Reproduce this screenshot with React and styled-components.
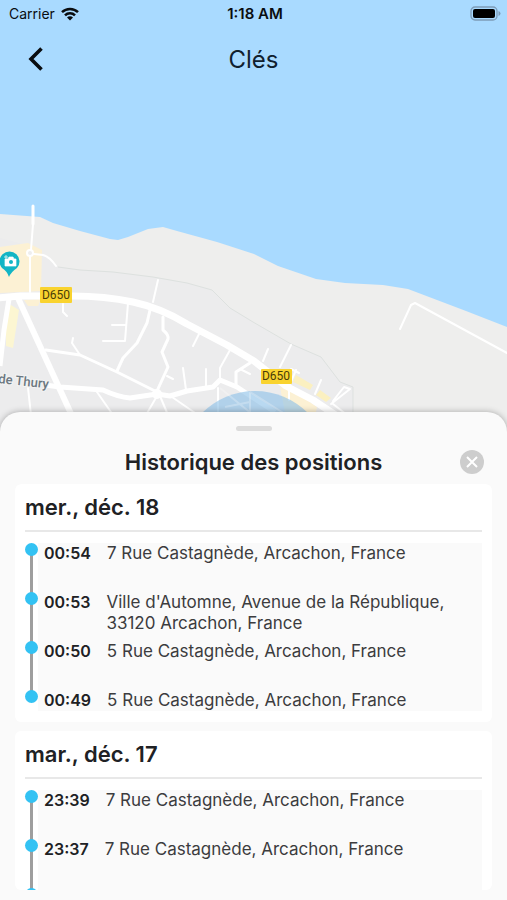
import styled, { createGlobalStyle } from "styled-components";

const history = [
  {
    day: "mer., déc. 18",
    positions: [
      { time: "00:54", address: "7 Rue Castagnède, Arcachon, France" },
      {
        time: "00:53",
        address: "Ville d'Automne, Avenue de la République, 33120 Arcachon, France",
      },
      { time: "00:50", address: "5 Rue Castagnède, Arcachon, France" },
      { time: "00:49", address: "5 Rue Castagnède, Arcachon, France" },
    ],
  },
  {
    day: "mar., déc. 17",
    positions: [
      { time: "23:39", address: "7 Rue Castagnède, Arcachon, France" },
      { time: "23:37", address: "7 Rue Castagnède, Arcachon, France" },
      { time: "23:36", address: "7 Rue Castagnède, Arcachon, France" },
    ],
  },
];

export default function App() {
  return (
    <Screen>
      <GlobalStyle />
      <CityMap />
      <MapPeek>
        <StatusBar />
        <NavBar>
          <BackButton type="button" aria-label="Retour">
            <svg width="18" height="26" viewBox="0 0 18 26">
              <path
                d="M14.500 2.500 4 13l10.500 10.500"
                fill="none"
                stroke="#0a0d10"
                strokeWidth="3.600"
                strokeLinejoin="miter"
              />
            </svg>
          </BackButton>
          <NavTitle>Clés</NavTitle>
        </NavBar>
      </MapPeek>
      <Sheet>
        <Grabber />
        <SheetHeader>
          <SheetTitle>Historique des positions</SheetTitle>
          <CloseButton type="button" aria-label="Fermer">
            <svg width="12" height="12" viewBox="0 0 12 12">
              <path d="M1 1l10 10M11 1 1 11" stroke="#fff" strokeWidth="2" />
            </svg>
          </CloseButton>
        </SheetHeader>
        <DayList>
          {history.map((item) => (
            <DayCard key={item.day}>
              <DayTitle>{item.day}</DayTitle>
              <Timeline>
                {item.positions.map((position) => (
                  <Position key={position.time}>
                    <Marker />
                    <PositionText>
                      <Time>{position.time}</Time>
                      <Address>{position.address}</Address>
                    </PositionText>
                  </Position>
                ))}
              </Timeline>
            </DayCard>
          ))}
        </DayList>
      </Sheet>
    </Screen>
  );
}

function StatusBar() {
  return (
    <StatusRow>
      <Carrier>
        Carrier
        <svg width="18" height="14" viewBox="0 0 18 14">
          <g fill="none" stroke="#0a0d10" strokeWidth="2.500">
            <path d="M1 5.200a11.500 11.500 0 0 1 16 0" />
            <path d="M4 8.400a7 7 0 0 1 10 0" />
          </g>
          <path d="M9 13.500 6 10.500a4.200 4.200 0 0 1 6 0z" fill="#0a0d10" />
        </svg>
      </Carrier>
      <Clock>1:18 AM</Clock>
      <Battery>
        <svg width="31" height="15" viewBox="0 0 31 15">
          <rect
            x="1"
            y="1"
            width="26"
            height="13"
            rx="4"
            fill="none"
            stroke="#7d9cb8"
            strokeWidth="1.300"
          />
          <rect x="3" y="3" width="22" height="9" rx="2" fill="#000" />
          <path d="M28.500 5v5q2-.8 2-2.500t-2-2.500z" fill="#7d9cb8" />
        </svg>
      </Battery>
    </StatusRow>
  );
}

function CityMap() {
  return (
    <MapSvg viewBox="0 0 507 450" preserveAspectRatio="xMidYMin slice">
      {/* sea, beach, town */}
      <rect width="507" height="450" fill="#a9daff" />
      <path
        d="M0 214 40 217 53 223 80 231 110 239 118 240 128 237 148 229 163 227 177 231 217 242 254 254 278 266 316 279 345 283 383 285 408 289 466 311 507 327V450H0Z"
        fill="#eeeeed"
      />
      <path
        d="M0 238 30 246 58 267 80 270 113 272 153 277 187 283 212 290 230 308 253 322 291 344 321 357 340 382 353 387V450H0Z"
        fill="#ececed"
      />
      <path
        d="M58 267 80 270 113 272 153 277 187 283 212 290 230 308 253 322 291 344 321 357 340 382 353 387V450"
        fill="none"
        stroke="#dde1df"
      />

      {/* shopping areas */}
      <g fill="#fcf1d4">
        <path d="M0 247 28 243 42 250 41 291 0 293Z" />
        <path d="M6 302 19 310 13 348 6 346Z" fill="#fcf6d2" />
        <path d="M24 300 41 299 38 306 28 306Z" />
        <path d="M296 375 313 385 310 390 293 382Z" fill="#fbf0c0" />
        <path d="M320 390 331 398 326 402 316 395Z" fill="#fbf0c0" />
        <path d="M280 387 290 388 317 407 316 412 285 412Z" />
      </g>

      {/* small streets */}
      <g
        fill="none"
        stroke="#fff"
        strokeWidth="2"
        strokeLinejoin="round"
        strokeLinecap="round"
      >
        <path d="M128 303 125 341H103M112 325H126" />
        <path d="M63 304V312L67 316M73 338 72 343 80 355" />
        <path d="M200 332 193 346M230 350 220 368V378M218 388V420" />
        <path d="M183 368 186 390M206 369V387M167 376 173 379" />
        <path d="M240 369 250 374M158 280 153 302M28 388 31 415" />
        <path d="M97 392 113 415M157 396 146 415M160 396 168 415M172 397 198 415" />
        <path d="M268 349 263 361M291 345 280 367M296 370 289 386V400M291 369 299 373" />
        <path d="M321 380 315 394M333 404 347 415" />
        <path d="M33 224 31 250M30 256V292" />
      </g>
      <g
        fill="none"
        stroke="#fff"
        strokeWidth="3"
        strokeLinejoin="round"
        strokeLinecap="round"
      >
        <path d="M33 206V224" />
        <path d="M34 254 43 255Q50 257 56 266" strokeWidth="2" />
        <path d="M46 350 80 355 117 372 157 392" />
        <path d="M150 310 147 323 137 343 123 358 117 371" />
        <path d="M163 317 163 330Q169 335 168 339L162 352 168 367 157 391" />
        <path d="M250 363 236 372V385" />
        <path d="M400 329 411 305 415 303 507 353" strokeWidth="2" />
        <path d="M331 404 350 389 344 387 333 401" strokeWidth="2" />
      </g>
      <circle cx="30" cy="253" r="3" fill="#eee" stroke="#fff" strokeWidth="2" />

      {/* main roads */}
      <g fill="none" stroke="#fff" strokeLinejoin="round">
        <path
          d="M-4 298 20 296 72 296Q105 296 133 302T187 324L227 345 254 361 286 386 313 400 340 418"
          strokeWidth="7"
        />
        <path d="M18 298 73 418" strokeWidth="6" />
        <path d="M9 299 4 330 0 366" strokeWidth="5" />
        <path
          d="M45 385 60 387 103 390Q118 397 130 398L157 394 170 396 187 391 213 387 220 380 237 387 252 397 275 412"
          strokeWidth="5"
        />
      </g>
      <circle cx="157" cy="394" r="5" fill="#fff" />

      {/* accuracy circle */}
      <circle cx="255" cy="466" r="75" fill="#8bbfe8" fillOpacity="0.6" />
      <path
        d="M220 388 252 414M250 392 285 414M250 392V414M225 407 250 402"
        fill="none"
        stroke="#fff"
        strokeOpacity="0.25"
        strokeWidth="2"
      />

      {/* point of interest */}
      <path
        d="M9 277Q7 271 2 268A10 10 0 1 1 17 268Q11 272 9 277Z"
        fill="#12b5c5"
      />
      <path
        d="M5 259h3l1-2h4l1 2h2v7H5zM4 257h4M6 255v4"
        fill="#fff"
        stroke="#fff"
        strokeWidth="0.700"
      />
      <circle cx="11" cy="262" r="2" fill="#12b5c5" />

      {/* labels */}
      <MapLabel x="-2" y="383" transform="rotate(6 -2 383)">
        de Thury
      </MapLabel>
      <rect x="40" y="287" width="32" height="16" rx="1" fill="#f9d32f" />
      <RoadNumber x="56" y="299">
        D650
      </RoadNumber>
      <rect x="261" y="369" width="31" height="15" rx="1" fill="#f9d32f" />
      <RoadNumber x="276" y="380">
        D650
      </RoadNumber>
    </MapSvg>
  );
}

const GlobalStyle = createGlobalStyle`
  * {
    box-sizing: border-box;
  }

  body {
    margin: 0;
    font-family: Inter, "Liberation Sans", sans-serif;
    color: #202124;
    background: #fafafa;
  }
`;

const Screen = styled.main`
  position: relative;
  display: flex;
  flex-direction: column;
  height: 100vh;
  overflow: hidden;
`;

const MapSvg = styled.svg`
  position: absolute;
  top: 0;
  left: 0;
  width: 100%;
  height: 450px;
`;

const MapLabel = styled.text`
  font-family: Roboto, sans-serif;
  font-size: 13px;
  font-weight: 500;
  fill: #6b7780;
  stroke: #f4f4f4;
  stroke-width: 2px;
  paint-order: stroke;
`;

const RoadNumber = styled.text`
  font-family: Roboto, sans-serif;
  font-size: 12px;
  text-anchor: middle;
  fill: #4a3c08;
`;

const MapPeek = styled.div`
  position: relative;
  flex: 0 0 412px;
`;

const StatusRow = styled.div`
  display: grid;
  grid-template-columns: 1fr auto 1fr;
  align-items: center;
  height: 27px;
  padding: 0 6px 0 9px;
  font-size: 14px;
  color: #0a0d10;
`;

const Carrier = styled.span`
  display: flex;
  align-items: center;
  gap: 6px;
`;

const Clock = styled.span`
  font-size: 15px;
  font-weight: 600;
`;

const Battery = styled.span`
  display: flex;
  justify-content: flex-end;
`;

const NavBar = styled.header`
  display: grid;
  grid-template-columns: 48px 1fr 48px;
  align-items: center;
  height: 64px;
  padding: 0 12px;
`;

const BackButton = styled.button`
  display: flex;
  align-items: center;
  justify-content: center;
  height: 48px;
  padding: 0;
  background: none;
  border: none;
`;

const NavTitle = styled.h1`
  margin: 0;
  font-size: 24px;
  font-weight: 400;
  text-align: center;
  color: #10202e;
`;

const Sheet = styled.section`
  position: relative;
  display: flex;
  flex: 1;
  flex-direction: column;
  min-height: 0;
  padding: 14px 15px 10px;
  background: #fafafa;
  border-radius: 20px 20px 0 0;
  box-shadow: 0 0 6px rgba(0, 0, 0, 0.3);
`;

const Grabber = styled.div`
  flex: none;
  align-self: center;
  width: 36px;
  height: 5px;
  background: #dcdcdc;
  border-radius: 3px;
`;

const SheetHeader = styled.div`
  display: grid;
  grid-template-columns: 32px 1fr 32px;
  align-items: center;
  flex: none;
  height: 53px;
  padding-top: 12px;
  padding-bottom: 4px;
`;

const SheetTitle = styled.h2`
  grid-column: 2;
  margin: 0;
  font-size: 22px;
  font-weight: 600;
  line-height: 32px;
  text-align: center;
`;

const CloseButton = styled.button`
  display: flex;
  align-items: center;
  justify-content: center;
  width: 24px;
  height: 24px;
  padding: 0;
  background: #cdcdcd;
  border: none;
  border-radius: 50%;
`;

const DayList = styled.div`
  display: flex;
  flex: 1;
  flex-direction: column;
  gap: 9px;
  min-height: 0;
  overflow-y: auto;
  scrollbar-width: none;
  border-radius: 6px;
`;

const DayCard = styled.article`
  flex: none;
  padding: 0 10px 11px;
  background: #fff;
  border-radius: 6px;
`;

const DayTitle = styled.h3`
  margin: 0 0 11px;
  font-size: 22px;
  font-weight: 600;
  line-height: 46px;
  border-bottom: 2px solid #e8e8e8;
`;

const Timeline = styled.ol`
  margin: 0;
  padding: 0;
  list-style: none;
`;

const Position = styled.li`
  display: flex;
  min-height: 49px;

  &:last-child {
    min-height: 21px;
  }
`;

const Marker = styled.span`
  position: relative;
  flex: none;
  width: 13px;

  &::before {
    content: "";
    position: absolute;
    top: 0;
    left: 0;
    z-index: 1;
    width: 13px;
    height: 13px;
    background: #33c2f3;
    border-radius: 50%;
  }

  &::after {
    content: "";
    position: absolute;
    top: 6px;
    bottom: -6px;
    left: 5px;
    width: 3px;
    background: #9e9e9e;
  }

  ${Position}:last-child &::after {
    display: none;
  }
`;

const PositionText = styled.div`
  display: flex;
  flex: 1;
  gap: 16px;
  padding-left: 6px;
  line-height: 21px;
  background: #fafafa;
`;

const Time = styled.time`
  font-size: 16px;
  font-weight: 600;
`;

const Address = styled.span`
  flex: 1;
  padding-right: 24px;
  font-size: 17px;
  color: #3c3c3e;
`;
